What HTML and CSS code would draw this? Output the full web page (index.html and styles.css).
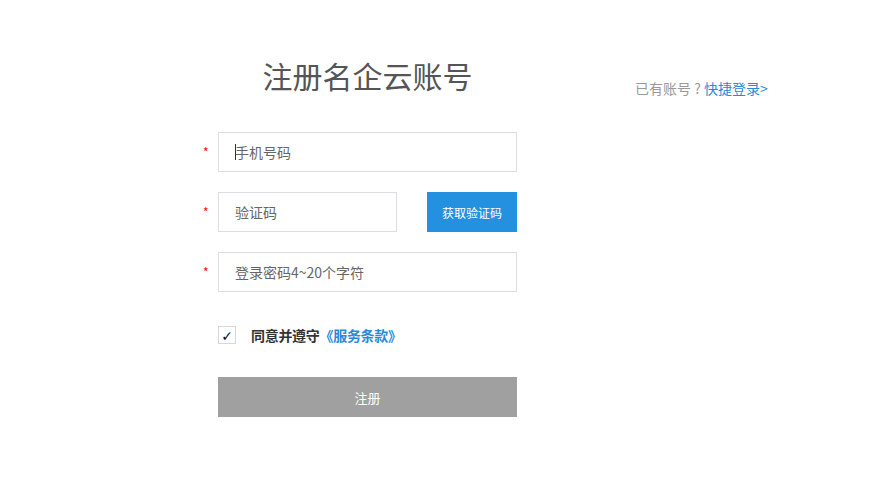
FILE: index.html
```html
<!DOCTYPE html>
<html>
<head>
<meta charset="UTF-8">
<title>注册名企云账号</title>
<link rel="stylesheet" href="styles.css">
</head>
<body>
<div class="page">
  <div class="head">
    <h1 class="title">注册名企云账号</h1>
    <div class="login">已有账号 ? <a href="#">快捷登录&gt;</a></div>
  </div>

  <form class="form" onsubmit="return false;">
    <div class="row">
      <span class="star">*</span>
      <span class="field wide">
        <i class="caret"></i>
        <input type="text" placeholder="手机号码">
      </span>
    </div>
    <div class="row">
      <span class="star">*</span>
      <span class="field short">
        <input type="text" placeholder="验证码">
      </span>
      <button type="button" class="code">获取验证码</button>
    </div>
    <div class="row">
      <span class="star">*</span>
      <span class="field wide">
        <input type="password" placeholder="登录密码4~20个字符">
      </span>
    </div>

    <div class="agree">
      <span class="check">✓</span>
      <span class="agree-text">同意并遵守<a href="#">《服务条款》</a></span>
    </div>

    <div class="submit-row">
      <button type="submit" class="submit">注册</button>
    </div>
  </form>
</div>
</body>
</html>
```

FILE: styles.css
```css
body {
	margin: 0;
	padding: 0;
	background: #fff;
	font-family: "Microsoft YaHei", "Noto Sans CJK SC", "Liberation Sans", sans-serif;
	color: #333;
}

.page {
	padding: 55px 0 0 200px;
}

/* title + login link */
.head {
	display: flex;
	align-items: flex-start;
}

.title {
	margin: 0 0 0 18px;
	width: 299px;
	text-align: center;
	font-size: 30px;
	font-weight: normal;
	line-height: 40px;
	color: #555;
}

.login {
	margin: 23px 0 0 118px;
	font-size: 14px;
	line-height: 20px;
	color: #999;
	white-space: nowrap;
}

.login a {
	color: #2a8ad8;
	text-decoration: none;
}

/* form rows */
.form {
	margin-top: 34px;
}

.row {
	display: flex;
	align-items: center;
	height: 40px;
	margin-bottom: 20px;
}

.star {
	width: 18px;
	font-size: 12px;
	color: #f00;
	padding-left: 3px;
	box-sizing: border-box;
	line-height: 12px;
	padding-top: 0;
}

.field {
	position: relative;
	display: block;
	height: 40px;
	box-sizing: border-box;
	border: 1px solid #dcdce4;
	background: #fff;
}

.wide {
	width: 299px;
}

.short {
	width: 179px;
}

.field input {
	width: 100%;
	height: 38px;
	box-sizing: border-box;
	border: 0;
	outline: none;
	padding: 0 0 0 16px;
	font-family: inherit;
	font-size: 14px;
	color: #333;
	background: transparent;
}

.field input::placeholder {
	color: #666;
}

.caret {
	position: absolute;
	left: 16px;
	top: 11px;
	width: 1px;
	height: 16px;
	background: #333;
}

.code {
	margin-left: 30px;
	width: 90px;
	height: 40px;
	border: 0;
	background: #2391e0;
	color: #fff;
	font-family: inherit;
	font-size: 12px;
	cursor: pointer;
	padding: 0;
}

/* agreement */
.agree {
	display: flex;
	align-items: center;
	margin: 34px 0 0 18px;
	height: 18px;
}

.check {
	width: 18px;
	height: 18px;
	box-sizing: border-box;
	border: 1px solid #d6d6de;
	font-size: 14px;
	line-height: 18px;
	text-align: center;
	color: #111;
	font-family: "DejaVu Sans", sans-serif;
	font-weight: bold;
}

.agree-text {
	margin-left: 15px;
	font-size: 14px;
	font-weight: bold;
	color: #333;
	letter-spacing: -0.3px;
}

.agree-text a {
	color: #2a8ad8;
	text-decoration: none;
}

/* register button */
.submit-row {
	margin: 33px 0 0 18px;
}

.submit {
	width: 299px;
	height: 40px;
	border: 0;
	background: #a0a0a0;
	color: #fff;
	font-family: inherit;
	font-size: 13px;
	padding: 0;
	cursor: pointer;
}
```
